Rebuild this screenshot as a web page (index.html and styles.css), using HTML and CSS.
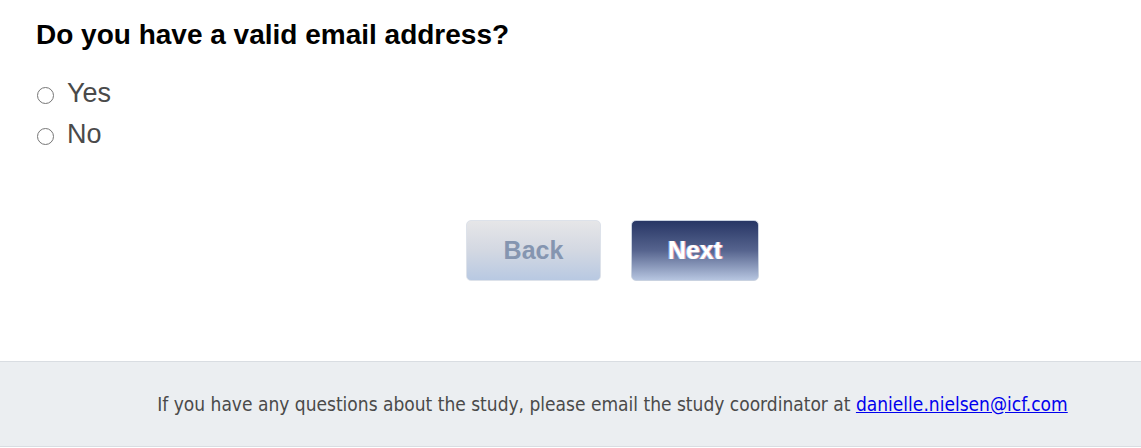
FILE: index.html
```html
<!DOCTYPE html>
<html>
<head>
<meta charset="utf-8">
<link rel="stylesheet" href="styles.css">
</head>
<body>
<main class="survey">
  <h1 class="question">Do you have a valid email address?</h1>
  <div class="options">
    <label class="option"><span class="radio"></span><span>Yes</span></label>
    <label class="option"><span class="radio"></span><span>No</span></label>
  </div>
  <div class="nav">
    <button class="btn btn-back">Back</button>
    <button class="btn btn-next">Next</button>
  </div>
</main>
<footer class="footer">
  <p class="footer-text">If you have any questions about the study, please email the study coordinator at <a href="#">danielle.nielsen@icf.com</a></p>
</footer>
</body>
</html>
```

FILE: styles.css
```css
html, body {
  margin: 0;
  padding: 0;
  background: #ffffff;
}
.survey {
  padding: 19px 0 0 36px;
  height: 361px;
  box-sizing: border-box;
}
.question {
  margin: 0;
  font-family: "Liberation Sans", Arial, sans-serif;
  font-weight: bold;
  font-size: 28px;
  line-height: 32px;
  color: #000;
}
.options {
  margin-top: 28px;
  display: flex;
  flex-direction: column;
  gap: 13px;
}
.option {
  display: flex;
  align-items: center;
  gap: 13px;
  font-family: "Liberation Sans", Arial, sans-serif;
  font-size: 27px;
  line-height: 28px;
  color: #4a4a4a;
  padding-left: 1px;
}
.radio {
  width: 17px;
  height: 17px;
  border: 1.5px solid #767676;
  border-radius: 50%;
  box-sizing: border-box;
  background: #fff;
  margin-top: 4px;
}
.nav {
  display: flex;
  justify-content: center;
  gap: 30px;
  margin-top: 72px;
  padding-left: 120px;
  padding-right: 36px;
  margin-left: -36px;
}
.btn {
  height: 61px;
  border-radius: 5px;
  font-family: "Liberation Sans", Arial, sans-serif;
  font-weight: bold;
  font-size: 25px;
  cursor: pointer;
}
.btn-back {
  width: 135px;
  border: 1px solid #dde2ea;
  background: linear-gradient(to bottom, #e6e6e8 0%, #d3d8e2 50%, #b8c9e2 100%);
  color: #8595b0;
}
.btn-next {
  width: 128px;
  border: 1px solid #c9d2e0;
  background: linear-gradient(to bottom, #273665 0%, #56648e 50%, #b6c5e0 100%);
  color: #ffffff;
  text-shadow: 1px 0 0 #e0a0b0, -1px 0 0 #a0c0f0;
}
.footer {
  background: #ebeef1;
  border-top: 1px solid #d9dde2;
  border-bottom: 1px solid #d9dde2;
  height: 84px;
  display: flex;
  align-items: center;
  justify-content: center;
  padding-left: 84px;
}
.footer-text {
  margin: 0;
  font-family: "DejaVu Sans Condensed", "DejaVu Sans", sans-serif;
  font-size: 19px;
  color: #4a4a4a;
}
.footer-text a {
  color: #0000ee;
  text-decoration: underline;
}
```
